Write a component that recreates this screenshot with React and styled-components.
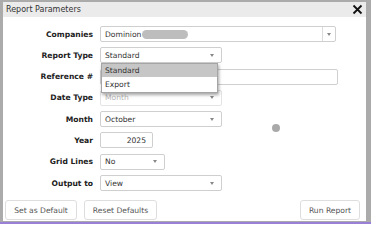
import styled, { createGlobalStyle } from "styled-components";

const GlobalStyle = createGlobalStyle`
  body {
    margin: 0;
    background: #fff;
    font-family: "DejaVu Sans", Verdana, sans-serif;
  }
`;

const Shell = styled.div`
  width: 371px;
  height: 222px;
  box-sizing: border-box;
  border-style: solid;
  border-color: #ababab;
  border-width: 2px 5px 1px 3px;
`;

const Dialog = styled.div`
  position: relative;
  height: 100%;
  background: #fff;
  display: flex;
  flex-direction: column;
`;

const PurpleLine = styled.div`
  width: 371px;
  height: 2px;
  background: #9a7fd6;
`;

const TitleBar = styled.div`
  height: 15px;
  background: #ebebeb;
  display: flex;
  align-items: center;
  justify-content: space-between;
  padding: 0 3px 0 3px;
  font-size: 8px;
  color: #333;
`;

const Close = styled.svg`
  width: 11px;
  height: 11px;
`;

const Form = styled.div`
  display: flex;
  flex-direction: column;
  gap: 5.3px;
  padding-top: 9px;
`;

const Row = styled.div`
  display: grid;
  grid-template-columns: 90px 1fr;
  column-gap: 7px;
  align-items: center;
  height: 16px;
`;

const Label = styled.div`
  text-align: right;
  font-weight: bold;
  font-size: 7.6px;
  color: #222;
  white-space: nowrap;
`;

const Field = styled.div`
  position: relative;
  width: ${(p) => p.$w}px;
  height: 16px;
  box-sizing: border-box;
  border: 1px solid ${(p) => (p.$disabled ? "#e4e4e4" : "#cfcfcf")};
  border-radius: 2px;
  background: #fff;
  display: flex;
  align-items: center;
  justify-content: ${(p) => (p.$right ? "flex-end" : "flex-start")};
  padding: 0 ${(p) => (p.$right ? 6 : 4)}px 0 4px;
  font-size: 7.6px;
  color: ${(p) => (p.$disabled ? "#b8b8b8" : "#333")};
`;

const Arrow = styled.span`
  position: absolute;
  right: 0;
  top: 0;
  bottom: 0;
  width: ${(p) => (p.$boxed ? 12 : 18)}px;
  border-left: ${(p) => (p.$boxed ? "1px solid #dcdcdc" : "none")};
  display: flex;
  align-items: center;
  justify-content: center;
  &::after {
    content: "";
    border-left: 2.5px solid transparent;
    border-right: 2.5px solid transparent;
    border-top: 3px solid #888;
  }
`;

const Chip = styled.span`
  display: inline-block;
  width: 46px;
  height: 9px;
  margin-left: 1px;
  border-radius: 5px;
  background: #bdbdbd;
`;

const Menu = styled.div`
  position: absolute;
  left: 0;
  top: 15px;
  width: 117px;
  box-sizing: border-box;
  border: 1px solid #a5a5a5;
  background: #fff;
  box-shadow: 1px 2px 3px rgba(0, 0, 0, 0.35);
  z-index: 2;
`;

const MenuItem = styled.div`
  height: ${(p) => (p.$active ? 13 : 15)}px;
  display: flex;
  align-items: center;
  padding-left: 3px;
  font-size: 7.6px;
  color: #333;
  background: ${(p) => (p.$active ? "#c6c6c6" : "#fff")};
`;

const Spinner = styled.div`
  position: absolute;
  left: 269px;
  top: 122px;
  width: 8px;
  height: 8px;
  border-radius: 50%;
  background: #a9a9a9;
`;

const Footer = styled.div`
  margin-top: auto;
  display: flex;
  align-items: center;
  gap: 7px;
  padding: 0 6px 1px 2px;
`;

const Button = styled.button`
  height: 20px;
  width: ${(p) => p.$w}px;
  padding: 0;
  margin-left: ${(p) => (p.$push ? "auto" : "0")};
  background: #fff;
  border: 1px solid #dedede;
  border-radius: 3px;
  font-family: "DejaVu Sans", Verdana, sans-serif;
  font-size: 7.6px;
  color: #555;
`;

export default function App() {
  return (
    <>
      <GlobalStyle />
      <Shell>
        <Dialog>
          <TitleBar>
            <span>Report Parameters</span>
            <Close viewBox="0 0 11 11">
              <path d="M1.5 1.5 L9.5 9.5 M9.5 1.5 L1.5 9.5" stroke="#111" strokeWidth="1.8" />
            </Close>
          </TitleBar>
          <Form>
            <Row>
              <Label>Companies</Label>
              <Field $w={236}>
                Dominion
                <Chip />
                <Arrow $boxed />
              </Field>
            </Row>
            <Row>
              <Label>Report Type</Label>
              <Field $w={122}>
                Standard
                <Arrow />
                <Menu>
                  <MenuItem $active>Standard</MenuItem>
                  <MenuItem>Export</MenuItem>
                </Menu>
              </Field>
            </Row>
            <Row>
              <Label>Reference #</Label>
              <Field $w={238} />
            </Row>
            <Row>
              <Label>Date Type</Label>
              <Field $w={122} $disabled>
                Month
                <Arrow />
              </Field>
            </Row>
            <Row>
              <Label>Month</Label>
              <Field $w={122}>
                October
                <Arrow />
              </Field>
            </Row>
            <Row>
              <Label>Year</Label>
              <Field $w={53} $right>
                2025
              </Field>
            </Row>
            <Row>
              <Label>Grid Lines</Label>
              <Field $w={65}>
                No
                <Arrow />
              </Field>
            </Row>
            <Row>
              <Label>Output to</Label>
              <Field $w={122}>
                View
                <Arrow />
              </Field>
            </Row>
          </Form>
          <Spinner />
          <Footer>
            <Button $w={72}>Set as Default</Button>
            <Button $w={73}>Reset Defaults</Button>
            <Button $w={60} $push>
              Run Report
            </Button>
          </Footer>
        </Dialog>
      </Shell>
      <PurpleLine />
    </>
  );
}
